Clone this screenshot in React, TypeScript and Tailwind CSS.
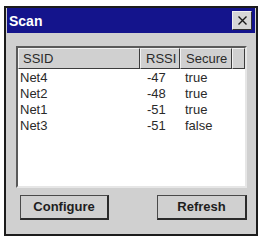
const rows = [
  { ssid: "Net4", rssi: "-47", secure: "true" },
  { ssid: "Net2", rssi: "-48", secure: "true" },
  { ssid: "Net1", rssi: "-51", secure: "true" },
  { ssid: "Net3", rssi: "-51", secure: "false" },
];

function HeaderCell({ label, className }: { label?: string; className: string }) {
  return (
    <div className={`h-full flex items-center border-t border-l border-t-[#f2f2f2] border-l-[#f2f2f2] border-r border-b border-r-[#3c3c3c] border-b-[#3c3c3c] ${className}`}>
      {label}
    </div>
  );
}

function Button({ label, className }: { label: string; className: string }) {
  return (
    <div className={`h-[25px] flex items-center justify-center border border-[#4a4a4a] border-r-[#2a2a2a] border-b-[#2a2a2a] border-b-2 border-r-2 bg-[#d0d0d0] font-bold text-[13px] text-[#1e1e1e] ${className}`}>
      {label}
    </div>
  );
}

export default function App() {
  return (
    <div className="w-[262px] h-[241px] bg-white pt-[6px] pl-[4px]" style={{ fontFamily: '"Liberation Sans", Arial, sans-serif' }}>
      <div className="w-[254px] h-[230px] border-2 border-[#1c1c1c] bg-[#d0d0d0] px-[1px] flex flex-col">
        {/* title bar */}
        <div className="h-[25px] bg-[#14148c] flex items-center justify-between pl-[2px] pr-[3px]">
          <span className="text-white font-bold text-[14px] leading-none">Scan</span>
          <div className="w-[20px] h-[19px] bg-[#d6d6d6] border-r border-b border-[#303030] border-t border-l border-t-[#f0f0f0] border-l-[#f0f0f0] flex items-center justify-center">
            <svg width="9" height="9" viewBox="0 0 9 9">
              <path d="M0.5 0.5 L8.5 8.5 M8.5 0.5 L0.5 8.5" stroke="#1a1a1a" strokeWidth="1.4" />
            </svg>
          </div>
        </div>

        {/* list */}
        <div className="ml-[9px] mt-[13px] w-[231px] h-[142px] bg-white border-2 border-t-[#5a5a5a] border-l-[#5a5a5a] border-r-[#e6e6e6] border-b-[#e6e6e6] text-[13px] text-[#2a2a2a]">
          <div className="h-[21px] flex bg-[#d0d0d0] text-[#2a2a2a]">
            <HeaderCell label="SSID" className="w-[122px] pl-[4px]" />
            <HeaderCell label="RSSI" className="w-[40px] pl-[5px]" />
            <HeaderCell label="Secure" className="w-[52px] pl-[5px]" />
            <HeaderCell className="flex-1" />
          </div>
          {rows.map((r) => (
            <div key={r.ssid} className="h-[16px] flex items-center leading-none">
              <div className="w-[122px] pl-[2px]">{r.ssid}</div>
              <div className="w-[40px] pl-[7px]">{r.rssi}</div>
              <div className="w-[52px] pl-[5px]">{r.secure}</div>
            </div>
          ))}
        </div>

        {/* buttons */}
        <div className="mt-[7px] flex justify-between pl-[13px] pr-[8px]">
          <Button label="Configure" className="w-[89px]" />
          <Button label="Refresh" className="w-[90px]" />
        </div>
      </div>
    </div>
  );
}
